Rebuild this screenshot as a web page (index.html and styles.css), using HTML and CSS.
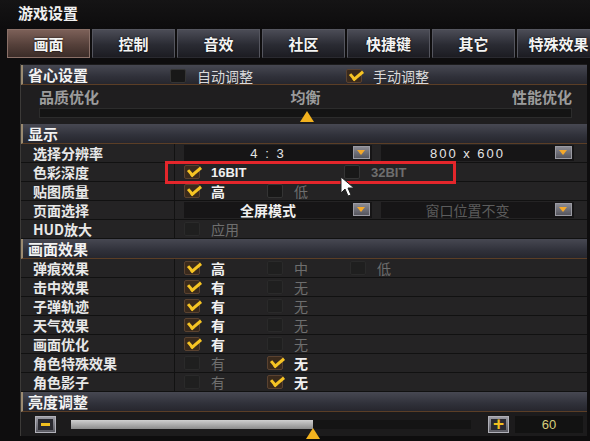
FILE: index.html
```html
<!DOCTYPE html>
<html lang="zh-CN">
<head>
    <meta charset="UTF-8">
    <title>游戏设置</title>
    <link rel="stylesheet" href="styles.css">
</head>
<body>
    <div class="window">
        <div class="titlebar">游戏设置</div>

        <div class="tabs">
            <div class="tab active">画面</div>
            <div class="tab">控制</div>
            <div class="tab">音效</div>
            <div class="tab">社区</div>
            <div class="tab">快捷键</div>
            <div class="tab">其它</div>
            <div class="tab">特殊效果</div>
        </div>

        <div class="panel">
            <!-- 省心设置 -->
            <div class="header">
                <span class="header-title">省心设置</span>
                <span class="head-opt auto"><i class="box"></i>自动调整</span>
                <span class="head-opt manual"><i class="box on"></i>手动调整</span>
            </div>
            <div class="quality">
                <div class="quality-labels">
                    <span>品质优化</span>
                    <span>均衡</span>
                    <span>性能优化</span>
                </div>
                <div class="track">
                    <span class="thumb" style="left: 260px"></span>
                </div>
            </div>

            <!-- 显示 -->
            <div class="header"><span class="header-title">显示</span></div>
            <div class="row">
                <div class="label">选择分辨率</div>
                <div class="val">
                    <div class="select num"><span>4 : 3</span><i class="drop"></i></div>
                    <div class="select num second"><span>800 x 600</span><i class="drop"></i></div>
                </div>
            </div>
            <div class="row">
                <div class="label">色彩深度</div>
                <div class="val">
                    <span class="opt wide"><i class="box on"></i><b class="latin">16BIT</b></span>
                    <span class="opt dim"><i class="box"></i><b class="latin">32BIT</b></span>
                </div>
            </div>
            <div class="row">
                <div class="label">贴图质量</div>
                <div class="val">
                    <span class="opt"><i class="box on"></i>高</span>
                    <span class="opt dim"><i class="box"></i>低</span>
                </div>
            </div>
            <div class="row">
                <div class="label">页面选择</div>
                <div class="val">
                    <div class="select"><span>全屏模式</span><i class="drop"></i></div>
                    <div class="select second off"><span>窗口位置不变</span><i class="drop"></i></div>
                </div>
            </div>
            <div class="row">
                <div class="label">HUD放大</div>
                <div class="val">
                    <span class="opt dim"><i class="box faint"></i>应用</span>
                </div>
            </div>

            <!-- 画面效果 -->
            <div class="header"><span class="header-title">画面效果</span></div>
            <div class="row">
                <div class="label">弹痕效果</div>
                <div class="val">
                    <span class="opt"><i class="box on"></i>高</span>
                    <span class="opt dim"><i class="box faint"></i>中</span>
                    <span class="opt dim"><i class="box faint"></i>低</span>
                </div>
            </div>
            <div class="row">
                <div class="label">击中效果</div>
                <div class="val">
                    <span class="opt"><i class="box on"></i>有</span>
                    <span class="opt dim"><i class="box faint"></i>无</span>
                </div>
            </div>
            <div class="row">
                <div class="label">子弹轨迹</div>
                <div class="val">
                    <span class="opt"><i class="box on"></i>有</span>
                    <span class="opt dim"><i class="box faint"></i>无</span>
                </div>
            </div>
            <div class="row">
                <div class="label">天气效果</div>
                <div class="val">
                    <span class="opt"><i class="box on"></i>有</span>
                    <span class="opt dim"><i class="box faint"></i>无</span>
                </div>
            </div>
            <div class="row">
                <div class="label">画面优化</div>
                <div class="val">
                    <span class="opt"><i class="box on"></i>有</span>
                    <span class="opt dim"><i class="box faint"></i>无</span>
                </div>
            </div>
            <div class="row">
                <div class="label">角色特殊效果</div>
                <div class="val">
                    <span class="opt dim"><i class="box faint"></i>有</span>
                    <span class="opt"><i class="box on"></i>无</span>
                </div>
            </div>
            <div class="row">
                <div class="label">角色影子</div>
                <div class="val">
                    <span class="opt dim"><i class="box faint"></i>有</span>
                    <span class="opt"><i class="box on"></i>无</span>
                </div>
            </div>

            <!-- 亮度调整 -->
            <div class="header"><span class="header-title">亮度调整</span></div>
            <div class="bright">
                <span class="btn minus"></span>
                <div class="btrack">
                    <span class="bfill" style="width: 242px"></span>
                    <span class="thumb bthumb" style="left: 235px"></span>
                </div>
                <span class="btn plus"></span>
                <span class="value">60</span>
            </div>
        </div>

        <div class="mark"></div>
        <svg class="cursor" width="16" height="22" viewBox="0 0 16 22">
            <path d="M1 1 L1 17 L5 13 L8 20 L11 19 L8 12 L14 12 Z" fill="#fff" stroke="#222" stroke-width="1"/>
        </svg>
    </div>
</body>
</html>
```

FILE: styles.css
```css
* {
    box-sizing: border-box;
}
body {
    margin: 0;
    background-color: #0c0b0c;
    font-family: "Noto Sans CJK SC", "Liberation Sans", sans-serif;
    font-size: 14px;
    color: #e6e6e6;
}
.window {
    position: relative;
    width: 590px;
    height: 441px;
    overflow: hidden;
    background-color: #0e0d0e;
}
.titlebar {
    height: 29px;
    padding-left: 18px;
    line-height: 26px;
    font-size: 15px;
    font-weight: bold;
    color: #f0f0f0;
    background: linear-gradient(#151415, #0d0c0d);
}
.tabs {
    display: flex;
    gap: 2px;
    padding-left: 7px;
    height: 29px;
    overflow: hidden;
}
.tab {
    flex-shrink: 0;
    width: 83px;
    height: 29px;
    display: flex;
    align-items: center;
    justify-content: center;
    font-size: 15px;
    font-weight: bold;
    color: #f4f4f4;
    text-shadow: 0 0 2px #000;
    background: linear-gradient(#4b4c56, #2a2b33 55%, #1c1c22);
    border: 1px solid #55565f;
    border-bottom-color: #2a2a30;
}
.tab.active {
    background: linear-gradient(#7c6058, #55403a 55%, #3b2c28);
    border-color: #8a7068;
}
.panel {
    margin: 6px 3px 0 20px;
    padding-top: 1px;
    background-color: #1c1b1c;
    border-left: 1px solid #3c3a38;
}
.header {
    position: relative;
    display: flex;
    align-items: center;
    height: 20px;
    background: linear-gradient(#474852, #30313a 60%, #26262d);
    border-left: 2px solid #9a8a70;
    border-bottom: 1px solid #5b3e26;
}
.header-title {
    padding-left: 5px;
    font-size: 15px;
    font-weight: bold;
    color: #f2f2f2;
}
.head-opt {
    position: absolute;
    top: 1px;
    display: flex;
    align-items: center;
    gap: 11px;
    font-size: 14px;
    color: #dadada;
}
.head-opt.auto {
    left: 147px;
}
.head-opt.manual {
    left: 323px;
}
.quality {
    height: 39px;
    padding: 3px 15px 0 18px;
    background-color: #1f1e1f;
}
.quality-labels {
    display: flex;
    justify-content: space-between;
    height: 18px;
    font-size: 15px;
    line-height: 18px;
    font-weight: bold;
    color: #9c9c9c;
}
.track {
    position: relative;
    height: 10px;
    margin-top: 2px;
    background-color: #141414;
    border: 1px solid #2c2c2c;
}
.thumb {
    position: absolute;
    top: 2px;
    width: 0;
    height: 0;
    border-left: 7px solid transparent;
    border-right: 7px solid transparent;
    border-bottom: 11px solid #f2b21e;
}
.row {
    display: flex;
    height: 19px;
    background-color: #242324;
    border-bottom: 1px solid #111;
}
.label {
    width: 154px;
    padding-left: 12px;
    line-height: 18px;
    font-weight: bold;
    color: #e8e8e8;
    border-right: 1px solid #121212;
}
.val {
    flex: 1;
    display: flex;
    align-items: center;
    padding-left: 9px;
}
.opt {
    display: flex;
    align-items: center;
    gap: 11px;
    width: 83px;
    font-weight: bold;
    color: #f0f0f0;
}
.opt.wide {
    width: 160px;
}
.opt.dim {
    color: #6e6e6e;
    font-weight: normal;
}
.latin {
    font-family: "Liberation Sans", sans-serif;
    font-size: 13px;
}
.box {
    position: relative;
    display: inline-block;
    width: 16px;
    height: 14px;
    background-color: #181818;
    border: 1px solid #343434;
    border-radius: 2px;
}
.box.faint {
    background-color: #1f1f1f;
    border-color: #2a2a2a;
}
.box.on {
    background-color: #3a2a1c;
    border-color: #5a4230;
}
.box.on::after {
    content: "";
    position: absolute;
    left: 3px;
    top: 0;
    width: 10px;
    height: 5px;
    border-left: 3px solid #f6c424;
    border-bottom: 3px solid #f6c424;
    transform: rotate(-40deg);
}
.select {
    position: relative;
    display: flex;
    align-items: center;
    justify-content: center;
    width: 188px;
    height: 16px;
    padding-right: 20px;
    background-color: #161516;
    font-weight: bold;
    color: #f0f0f0;
}
.select.num {
    font-family: "Liberation Sans", sans-serif;
    font-size: 13px;
    font-weight: normal;
    letter-spacing: 2px;
    color: #e4e4e4;
}
.select.second {
    margin-left: 9px;
    width: 193px;
}
.select.off {
    color: #5c5c5c;
    font-weight: normal;
}
.drop {
    position: absolute;
    right: 2px;
    top: 1px;
    width: 17px;
    height: 13px;
    background: linear-gradient(#8a8a92, #55555d);
    border: 1px solid #9a9aa2;
}
.drop::after {
    content: "";
    position: absolute;
    left: 3px;
    top: 3px;
    width: 0;
    height: 0;
    border-left: 4px solid transparent;
    border-right: 4px solid transparent;
    border-top: 5px solid #f4a82a;
}
.bright {
    display: flex;
    align-items: center;
    height: 24px;
    padding: 0 4px 0 14px;
    background-color: #1c1b1c;
}
.btn {
    position: relative;
    width: 21px;
    height: 17px;
    background: linear-gradient(#9a9aa2, #5a5a62);
    border: 1px solid #b0b0b8;
}
.btn::before {
    content: "";
    position: absolute;
    inset: 2px;
    background-color: #2a2a30;
}
.minus::after {
    content: "";
    position: absolute;
    left: 5px;
    top: 6px;
    width: 9px;
    height: 3px;
    background-color: #f2c020;
}
.plus::after {
    content: "+";
    position: absolute;
    left: 0;
    right: 0;
    top: -4px;
    text-align: center;
    font-family: "Liberation Sans", sans-serif;
    font-size: 19px;
    font-weight: bold;
    color: #f2c020;
}
.btrack {
    position: relative;
    width: 400px;
    height: 9px;
    margin: 0 17px 0 15px;
    background-color: #141414;
}
.bfill {
    display: block;
    height: 100%;
    background: linear-gradient(#d0d0d0, #8c8c8c);
}
.bthumb {
    top: 8px;
}
.value {
    width: 68px;
    height: 17px;
    margin-left: 6px;
    line-height: 17px;
    text-align: center;
    font-family: "Liberation Sans", sans-serif;
    font-size: 13px;
    color: #d8cf7c;
    background-color: #121212;
}
.mark {
    position: absolute;
    left: 165px;
    top: 161px;
    width: 291px;
    height: 23px;
    border: 3px solid #e4262b;
}
.cursor {
    position: absolute;
    left: 340px;
    top: 176px;
}
```
